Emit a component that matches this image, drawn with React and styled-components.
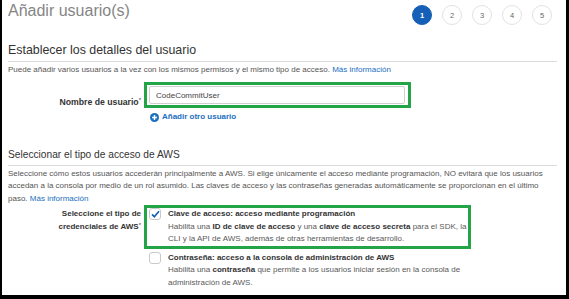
import React from 'react'
import styled, { createGlobalStyle } from 'styled-components'

const GlobalStyle = createGlobalStyle`
  html, body {
    margin: 0;
    padding: 0;
    background: #fff;
  }
  body {
    font-family: 'Liberation Sans', Arial, sans-serif;
  }
`

const Frame = styled.div`
  width: 569px;
  height: 299px;
  box-sizing: border-box;
  background: #000;
  padding: 0 3px 4px 2px;
`

const Panel = styled.div`
  height: 100%;
  box-sizing: border-box;
  background: #fff;
  padding: 0 9px 0 6px;
  overflow: hidden;
  color: #555;
`

const Header = styled.header`
  display: flex;
  justify-content: space-between;
  align-items: flex-start;
  padding-top: 1px;
`

const Title = styled.h1`
  margin: 0;
  font-size: 16px;
  line-height: 20px;
  font-weight: normal;
  color: #858585;
`

const Steps = styled.ol`
  display: flex;
  gap: 10px;
  margin: 4px 5px 0 0;
  padding: 0;
  list-style: none;
`

const Step = styled.li`
  width: 20px;
  height: 20px;
  box-sizing: border-box;
  border-radius: 50%;
  display: flex;
  align-items: center;
  justify-content: center;
  font-size: 7.5px;
  font-weight: ${(p) => (p.$active ? 'bold' : 'normal')};
  color: ${(p) => (p.$active ? '#fff' : '#666')};
  background: ${(p) => (p.$active ? '#1560b6' : '#fff')};
  border: 1px solid ${(p) => (p.$active ? '#1560b6' : '#e2e2e2')};
`

const SectionTitle = styled.h2`
  margin: ${(p) => p.$top}px 0 0;
  padding-bottom: ${(p) => p.$pad}px;
  border-bottom: 1px solid #dcdcdc;
  font-weight: normal;
  color: #333;
  font-size: ${(p) => p.$size}px;
  line-height: ${(p) => p.$lh}px;
`

const Text = styled.p`
  margin: 2px 0 0;
  font-size: 8px;
  line-height: ${(p) => p.$lh || 12}px;
  color: #555;
  white-space: nowrap;
`

const Link = styled.a`
  color: #1a6fc0;
  text-decoration: none;
`

const FormRow = styled.div`
  display: grid;
  grid-template-columns: 133px 1fr;
  column-gap: 3px;
  align-items: ${(p) => p.$align || 'center'};
  margin-top: ${(p) => p.$top || 0}px;
`

const Label = styled.label`
  text-align: right;
  font-size: ${(p) => p.$size || 8}px;
  line-height: 12.5px;
  padding-top: ${(p) => p.$padTop || 0}px;
  font-weight: bold;
  color: #333;

  sup {
    font-size: 6px;
    font-weight: normal;
    vertical-align: top;
    line-height: 8px;
  }
`

const Highlight = styled.div`
  box-sizing: border-box;
  width: ${(p) => p.$width}px;
  border: 3px solid ${(p) => (p.$on ? '#22a447' : 'transparent')};
  padding: ${(p) => p.$pad};
`

const Input = styled.div`
  height: 18px;
  box-sizing: border-box;
  border: 1px solid #cfcfcf;
  border-radius: 2px;
  padding-left: 6px;
  display: flex;
  align-items: center;
  font-size: 8px;
  color: #444;
`

const Field = styled.div`
  display: flex;
  flex-direction: column;
`

const AddLink = styled.a`
  display: flex;
  align-items: center;
  gap: 3px;
  margin: 3px 0 0 6px;
  font-size: 8px;
  line-height: 12px;
  font-weight: bold;
  color: #1a6fc0;
  text-decoration: none;
`

const Options = styled.div`
  display: flex;
  flex-direction: column;
`

const Option = styled.div`
  display: flex;
  gap: 7px;
  align-items: flex-start;
`

const Box = styled.span`
  flex: none;
  width: 12px;
  height: 12px;
  box-sizing: border-box;
  border: 1px solid #c9c9c9;
  border-radius: 3px;
  background: #fff;
  display: flex;
  align-items: center;
  justify-content: center;
`

const OptionText = styled.div`
  font-size: 8px;
  line-height: 12.5px;
  color: #5a5a5a;
  white-space: nowrap;

  strong {
    color: #333;
  }
`

const PlusIcon = () => (
  <svg width="9" height="9" viewBox="0 0 10 10">
    <circle cx="5" cy="5" r="5" fill="#1a6fc0" />
    <path d="M5 2.3v5.4M2.3 5h5.4" stroke="#fff" strokeWidth="1.6" />
  </svg>
)

const Check = () => (
  <svg width="9" height="8" viewBox="0 0 9 8">
    <path d="M1 4.4l2.3 2.3L8 1.2" fill="none" stroke="#1560b6" strokeWidth="1.7" />
  </svg>
)

const App = () => (
  <>
    <GlobalStyle />
    <Frame>
      <Panel>
        <Header>
          <Title>Añadir usuario(s)</Title>
          <Steps>
            {[1, 2, 3, 4, 5].map((n) => (
              <Step key={n} $active={n === 1}>
                {n}
              </Step>
            ))}
          </Steps>
        </Header>

        <SectionTitle $top={18} $pad={3} $size={12.4} $lh={15}>
          Establecer los detalles del usuario
        </SectionTitle>
        <Text>
          Puede añadir varios usuarios a la vez con los mismos permisos y el mismo tipo de acceso.{' '}
          <Link>Más información</Link>
        </Text>

        <FormRow $top={6}>
          <Label $size={8.7}>
            Nombre de usuario<sup>*</sup>
          </Label>
          <Field>
            <Highlight $on $width={267} $pad="1px 3px 1px 2px">
              <Input>CodeCommitUser</Input>
            </Highlight>
            <AddLink>
              <PlusIcon />
              Añadir otro usuario
            </AddLink>
          </Field>
        </FormRow>

        <SectionTitle $top={25} $pad={4} $size={10.2} $lh={13}>
          Seleccionar el tipo de acceso de AWS
        </SectionTitle>
        <Text $lh={12.4}>
          Seleccione cómo estos usuarios accederán principalmente a AWS. Si elige únicamente el acceso mediante programación, NO evitará que los usuarios
          <br />
          accedan a la consola por medio de un rol asumido. Las claves de acceso y las contraseñas generadas automáticamente se proporcionan en el último
          <br />
          paso. <Link>Más información</Link>
        </Text>

        <FormRow $align="start">
          <Label $padTop={3}>
            Seleccione el tipo de
            <br />
            credenciales de AWS<sup>*</sup>
          </Label>
          <Options>
            <Highlight $on $width={327} $pad="0 2px">
              <Option>
                <Box>
                  <Check />
                </Box>
                <OptionText>
                  <strong>Clave de acceso: acceso mediante programación</strong>
                  <br />
                  Habilita una <strong>ID de clave de acceso</strong> y una <strong>clave de acceso secreta</strong> para el SDK, la
                  <br />
                  CLI y la API de AWS, además de otras herramientas de desarrollo.
                </OptionText>
              </Option>
            </Highlight>
            <Highlight $width={327} $pad="0 2px">
              <Option>
                <Box />
                <OptionText>
                  <strong>Contraseña: acceso a la consola de administración de AWS</strong>
                  <br />
                  Habilita una <strong>contraseña</strong> que permite a los usuarios iniciar sesión en la consola de
                  <br />
                  administración de AWS.
                </OptionText>
              </Option>
            </Highlight>
          </Options>
        </FormRow>
      </Panel>
    </Frame>
  </>
)

export default App
